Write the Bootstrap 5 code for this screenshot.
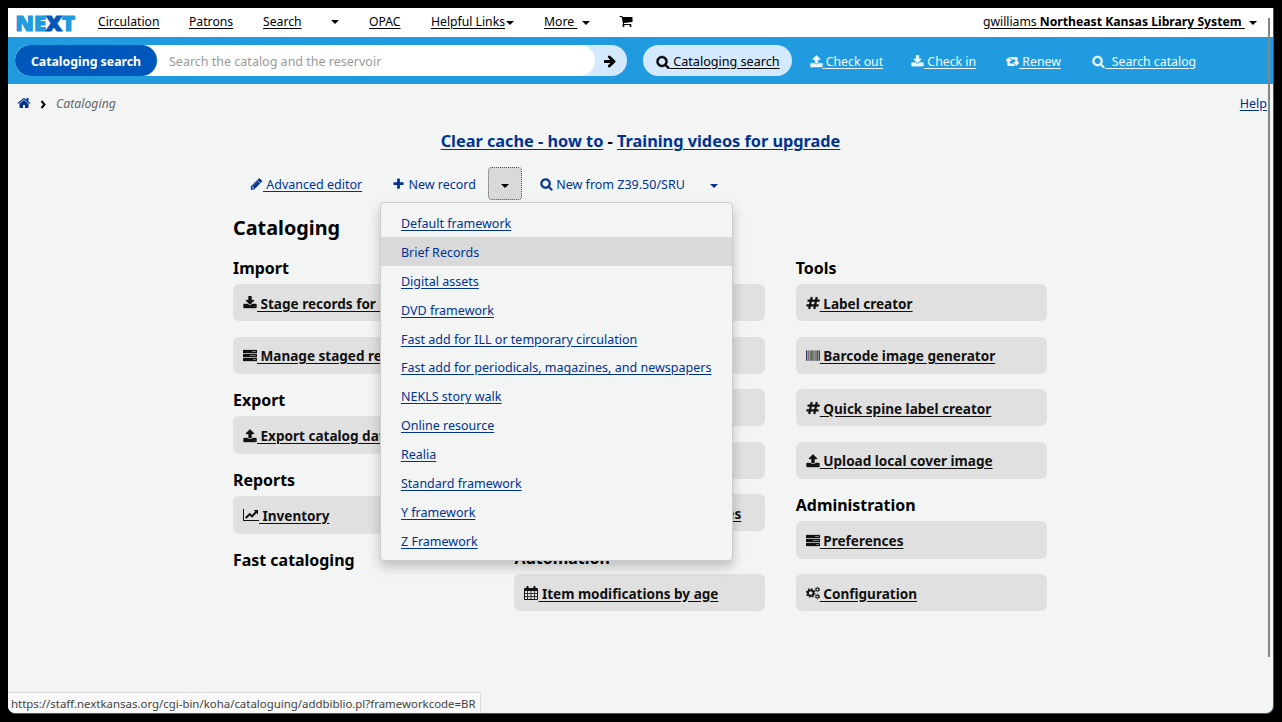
<!DOCTYPE html>
<html lang="en">
<head>
<meta charset="utf-8">
<title>Cataloging - Koha</title>
<link href="https://cdn.jsdelivr.net/npm/bootstrap@5.3.0/dist/css/bootstrap.min.css" rel="stylesheet">
<style>
body{background:#000;font-family:"Noto Sans","Open Sans",sans-serif;font-size:12.5px;line-height:18px;color:#000;height:722px;overflow:hidden;padding:8px}
a{color:#003391;text-underline-offset:2px}
.ico{width:14px;height:14px;fill:currentColor;vertical-align:-2px;overflow:visible;display:inline-block}
.window{height:706px;width:1266px;background:#f3f5f4;border-radius:0 0 8px 8px;border-right:1px solid #26627c;border-bottom:1px solid #26627c}
.topbar{height:29px;background:#fff;font-size:12.2px}
.topbar a{color:#000;white-space:pre}
.topbar .links{display:grid;grid-template-columns:91px 74px 68px 38px 62px 113px 75px 30px;align-items:center;height:28px;padding-left:15px}
.logo{width:75px;padding-left:7px}
.logo svg{display:block;margin-top:2px;overflow:visible}
.caret{display:inline-block;width:8px;border:4px solid transparent;border-top-color:currentColor;border-bottom:0;vertical-align:1px}
.searchbar{height:47px;background:#219be0;font-size:12.5px}
.pillbox{width:612px;height:31px;background:#d4e9fd;border-radius:16px}
.pillbox .field{width:580px;height:31px;background:#fff;border-radius:16px}
.pillbox .kind{width:142px;height:31px;padding-top:2px;border-radius:16px;background:#0057bb;color:#fff;font-size:12.3px;font-weight:700}
.pillbox .hint{color:#999;padding:2px 0 0 12px}
.modes a{color:#f2faff;white-space:pre;font-size:12.3px;padding-top:2px}
.modes a:not(.chosen) .ico{width:13px;height:13px}
.modes .chosen{height:31px;border-radius:16px;background:#d4e9fd;width:149px;padding-left:13px;color:#000;font-size:12.6px}
.crumbs{height:40px;padding:0 6px 0 9px}
.news{font-size:16.3px;font-weight:700;line-height:24px;height:43px;padding-top:5px}
.toolbar{height:33px;margin-left:242px;white-space:pre}
.toolbar>a{padding-top:2px}
.toggle{width:34px;height:33px;background:#d9d9d9;border:1px dotted #555;border-radius:4px}
.frameworks{position:absolute;left:-109px;top:34px;width:353px;height:359px;background:#f3f5f4;border:1px solid #ccc;border-radius:4px;box-shadow:0 6px 12px rgba(0,0,0,.22);padding:5px 0;z-index:5;margin:0;list-style:none;white-space:normal}
.frameworks a{display:block;height:28.9px;line-height:31px;padding-left:20px;font-size:12.53px;white-space:nowrap}
.frameworks .hot{background:#d9d9d9;text-decoration:none}
.content{margin-left:225px;width:814px}
.content h1{font-size:19.8px;line-height:28px;font-weight:700;margin:14.3px 0 14.5px}
.content h2{font-size:15.95px;line-height:22px;font-weight:700;margin:0 0 5.3px}
.modules{display:grid;grid-template-columns:repeat(3,251px);gap:30.4px}
.tile{display:flex;align-items:center;height:37.4px;margin-bottom:15.1px;padding:2px 0 0 10px;background:#e0e0e0;border-radius:6px;color:#111;font-size:13.55px;font-weight:700;white-space:pre;overflow:hidden}
.tile .ico{margin-top:-1px}
.status{position:absolute;left:8px;top:692px;width:473px;height:21px;background:#f9f9f9;border:1px solid #dcdcdc;border-left:0;border-bottom:0;border-bottom-left-radius:7px;padding-left:3px;font-size:11.43px;line-height:21px;color:#444;white-space:nowrap}
.scroller{position:absolute;left:1268px;top:18px;width:2px;height:639px;background:#858585}
</style>
</head>
<body>
<svg class="d-none">
<symbol id="search" viewBox="0 0 1792 1792"><path d="M1216 832q0-185-131.500-316.500t-316.500-131.500-316.500 131.500-131.500 316.500 131.500 316.500 316.500 131.500 316.500-131.500 131.500-316.500zm512 832q0 52-38 90t-90 38q-54 0-90-38l-343-342q-179 124-399 124-143 0-273.500-55.500t-225-150-150-225-55.500-273.500 55.500-273.500 150-225 225-150 273.500-55.500 273.500 55.500 225 150 150 225 55.500 273.500q0 220-124 399l343 343q37 37 37 90z" stroke="currentColor" stroke-width="50"/></symbol>
<symbol id="home" viewBox="0 0 1792 1792"><path d="M1472 992v480q0 26-19 45t-45 19h-384v-384h-256v384h-384q-26 0-45-19t-19-45v-480l576-477 575 474q1 2 1 6zm223-69l-62 74q-8 9-21 11h-3q-13 0-21-7l-692-577-692 577q-12 8-24 7-13-2-21-11l-62-74q-8-10-7-23.500t11-21.500l719-599q32-26 76-26t76 26l244 204v-195q0-14 9-23t23-9h192q14 0 23 9t9 23v408l219 182q10 8 11 21.500t-7 23.500z"/></symbol>
<symbol id="plus" viewBox="0 0 1792 1792"><path d="M1600 736v192q0 40-28 68t-68 28h-416v416q0 40-28 68t-68 28h-192q-40 0-68-28t-28-68v-416h-416q-40 0-68-28t-28-68v-192q0-40 28-68t68-28h416v-416q0-40 28-68t68-28h192q40 0 68 28t28 68v416h416q40 0 68 28t28 68z"/></symbol>
<symbol id="pencil" viewBox="0 0 1792 1792"><path d="M491 1536l91-91-235-235-91 91v107h128v128h107zm523-928q0-22-22-22-10 0-17 7l-542 542q-7 7-7 17 0 22 22 22 10 0 17-7l542-542q7-7 7-17zm-54-192l416 416-832 832h-416v-416zm683 96q0 53-37 90l-166 166-416-416 166-165q36-38 90-38 53 0 91 38l235 234q37 39 37 91z" stroke="currentColor" stroke-width="40"/></symbol>
<symbol id="upload" viewBox="0 0 1792 1792"><path d="M1600 1472q0-26-19-45t-45-19-45 19-19 45 19 45 45 19 45-19 19-45zm128-224v320q0 40-28 68t-68 28h-1472q-40 0-68-28t-28-68v-320q0-40 28-68t68-28h427q21 56 70.500 92t110.500 36h256q61 0 110.500-36t70.500-92h427q40 0 68 28t28 68zm-325-648q-17 40-59 40h-256v448q0 26-19 45t-45 19h-256q-26 0-45-19t-19-45v-448h-256q-42 0-59-40-17-39 14-69l448-448q18-19 45-19t45 19l448 448q31 30 14 69z" stroke="currentColor" stroke-width="50"/></symbol>
<symbol id="download" viewBox="0 0 1792 1792"><path d="M1600 1344q0-26-19-45t-45-19-45 19-19 45 19 45 45 19 45-19 19-45zm128-224v320q0 40-28 68t-68 28h-1472q-40 0-68-28t-28-68v-320q0-40 28-68t68-28h465l135 136q58 56 136 56t136-56l136-136h464q40 0 68 28t28 68zm-325-569q17 41-14 70l-448 448q-18 19-45 19t-45-19l-448-448q-31-29-14-70 17-39 59-39h256v-448q0-26 19-45t45-19h256q26 0 45 19t19 45v448h256q42 0 59 39z" stroke="currentColor" stroke-width="50"/></symbol>
<symbol id="cart" viewBox="0 0 1792 1792"><path d="M704 1536q0 52-38 90t-90 38-90-38-38-90 38-90 90-38 90 38 38 90zm896 0q0 52-38 90t-90 38-90-38-38-90 38-90 90-38 90 38 38 90zm128-1088v512q0 24-16.500 42.500t-40.500 21.500l-1044 122q13 60 13 70 0 16-24 64h920q26 0 45 19t19 45-19 45-45 19h-1024q-26 0-45-19t-19-45q0-11 8-31.500t16-36 21.500-40 15.500-29.500l-177-823h-204q-26 0-45-19t-19-45 19-45 45-19h256q16 0 28.500 6.500t19.500 15.500 13 24.500 8 26 5.500 29.500 4.500 26h1201q26 0 45 19t19 45z"/></symbol>
<symbol id="arrow" viewBox="0 0 1792 1792"><path d="M1600 960q0 54-37 91l-651 651q-39 37-91 37-51 0-90-37l-75-75q-38-38-38-91t38-91l293-293h-704q-52 0-84.500-37.500t-32.500-90.500v-128q0-53 32.500-90.500t84.500-37.500h704l-293-294q-38-36-38-90t38-90l75-75q38-38 90-38 53 0 91 38l651 651q37 35 37 90z"/></symbol>
<symbol id="retweet" viewBox="0 0 14 14"><path d="M-1 6.500 2.700 2.300 6.300 6.500H4.100v2.700h4.200L10.300 11.900H2.700q-1.200 0-1.200-1.200V6.500zM15 7.500 11.300 11.700 7.700 7.500h2.200V4.800H5.700L3.700 2.100h7.600q1.200 0 1.200 1.200V7.500z"/></symbol>
<symbol id="server" viewBox="0 0 14 14"><path fill-rule="evenodd" stroke="currentColor" stroke-width=".25" d="M.4 1h13.200q.4 0 .4.400v2.300q0 .4-.4.400H.4q-.4 0-.4-.4V1.400q0-.4.400-.4zM9 2.200v.7h4v-.7zM.4 5h13.200q.4 0 .4.400v2.300q0 .4-.4.400H.4q-.4 0-.4-.4V5.400q0-.4.400-.4zM6.500 6.200v.7H13v-.7zM.4 9h13.200q.4 0 .4.400v2.300q0 .4-.4.400H.4q-.4 0-.4-.4V9.400q0-.4.400-.4zM10 10.200v.7h3v-.7z"/></symbol>
<symbol id="chart" viewBox="0 0 16 14"><path d="M0 1h1v11h15v1H0zM15 2v4.500l-1.400-1.400-4.600 4.600-2.200-2.200-3.300 3.300L2 9.300l4.800-4.600L9 6.900l3.100-3.300L10.700 2z"/></symbol>
<symbol id="hash" viewBox="0 0 14 14"><path fill="none" stroke="currentColor" stroke-width="2.200" d="M5.700 1 3.200 13M10.800 1 8.300 13M1.500 4.700h12.200M.4 9.300h12.200"/></symbol>
<symbol id="barcode" viewBox="0 0 15 14"><path fill="#a9a4a4" d="M0 1h15v11H0z"/><path fill="#30305c" d="M0 1h1v11H0zM5 1h1v11H5zM12 1h1v11h-1zM14 1h1v11h-1z"/><path fill="#7b6178" d="M2 1h1v11H2zM8 1h1v11H8zM10 1h1v11h-1z"/><path fill="#668066" d="M4 1h1v11H4zM6.500 1h1v11h-1zM11 1h1v11h-1z"/></symbol>
<symbol id="calendar" viewBox="0 0 14 14"><path fill-rule="evenodd" d="M1 2h1.500V.8q0-.8.800-.8h.5q.8 0 .8.800V2h4.800V.8q0-.8.800-.8h.5q.8 0 .8.800V2H13q1 0 1 1v10q0 1-1 1H1q-1 0-1-1V3q0-1 1-1zM1 5v2h2.200V5zm3 0v2h2.600V5zm3.400 0v2H10V5zm3.400 0v2H13V5zM1 7.800v2.200h2.200V7.800zm3 0v2.200h2.600V7.800zm3.400 0v2.200H10V7.800zm3.400 0v2.200H13V7.800zM1 10.800V13h2.200v-2.200zm3 0V13h2.600v-2.200zm3.400 0V13H10v-2.200zm3.400 0V13H13v-2.200z"/></symbol>
<symbol id="cogs" viewBox="0 0 15 14"><g fill="none" stroke="currentColor"><circle cx="5" cy="7" r="3" stroke-width="2"/><circle cx="5" cy="7" r="4.500" stroke-width="1.300" stroke-dasharray="1.770"/><circle cx="12.200" cy="3.200" r="1.600" stroke-width="1.200"/><circle cx="12.200" cy="3.200" r="2.500" stroke-width=".8" stroke-dasharray="1.300"/><circle cx="12.200" cy="10.800" r="1.600" stroke-width="1.200"/><circle cx="12.200" cy="10.800" r="2.500" stroke-width=".8" stroke-dasharray="1.300"/></g></symbol>
</svg>

<div class="window">
  <header class="topbar d-flex align-items-start">
    <div class="logo"><svg width="62" height="26"><text x=".5" y="20.500" textLength="59.500" lengthAdjust="spacingAndGlyphs" font-family="Open Sans" font-weight="800" font-size="21.500" fill="#219be0" stroke="#219be0" stroke-width="1.200">NE<tspan fill="#0057bb" stroke="#0057bb">X</tspan>T</text></svg></div>
    <nav class="links flex-grow-1">
      <a href="#">Circulation</a><a href="#">Patrons</a><a href="#">Search</a><span class="caret"></span><a href="#">OPAC</a><a href="#" class="text-decoration-none"><u>Helpful Links</u><span class="caret" style="margin-left:1px"></span></a><a href="#" class="text-decoration-none"><u>More </u> <span class="caret" style="margin-left:2px"></span></a><a href="#"><svg class="ico"><use href="#cart"/></svg></a>
    </nav>
    <a href="#" class="text-decoration-none" style="line-height:28px;padding-right:16px"><u>gwilliams <b>Northeast Kansas Library System </b></u> <span class="caret" style="margin-left:1px"></span></a>
  </header>

  <div class="searchbar d-flex align-items-center">
    <div class="pillbox d-flex align-items-center" style="margin-left:7px">
      <div class="field d-flex align-items-center"><div class="kind d-flex align-items-center justify-content-center">Cataloging search</div><span class="hint">Search the catalog and the reservoir</span></div>
      <svg class="ico" style="margin-left:8px"><use href="#arrow"/></svg>
    </div>
    <nav class="modes d-flex align-items-center" style="margin-left:16px">
      <a href="#" class="chosen d-flex align-items-center"><svg class="ico"><use href="#search"/></svg><span> Cataloging search</span></a>
      <a href="#" style="margin-left:17.500px"><svg class="ico"><use href="#upload"/></svg> Check out</a>
      <a href="#" style="margin-left:28px"><svg class="ico"><use href="#download"/></svg> Check in</a>
      <a href="#" style="margin-left:30px"><svg class="ico"><use href="#retweet"/></svg> Renew</a>
      <a href="#" style="margin-left:31.500px"><svg class="ico"><use href="#search"/></svg>  Search catalog</a>
    </nav>
  </div>

  <div class="crumbs d-flex align-items-center">
    <a href="#"><svg class="ico"><use href="#home"/></svg></a>
    <svg width="6" height="9" style="margin-left:9px"><path d="M1.500 1 4.500 4.500 1.500 8" fill="none" stroke="#000" stroke-width="2"/></svg>
    <i style="margin-left:10px;color:#666;font-size:12.3px">Cataloging</i>
    <a href="#" class="ms-auto">Help</a>
  </div>

  <div class="news text-center"><a href="#">Clear cache - how to</a> - <a href="#">Training videos for upgrade</a></div>

  <div class="toolbar d-flex align-items-center">
    <a href="#"><svg class="ico" style="width:13px"><use href="#pencil"/></svg> Advanced editor</a>
    <a href="#" class="text-decoration-none" style="margin-left:30px"><svg class="ico" style="width:13px"><use href="#plus"/></svg> New record</a>
    <div class="toggle position-relative d-flex align-items-center justify-content-center" style="margin-left:12px;margin-right:12px">
      <span class="caret mt-1"></span>
      <ul class="frameworks">
        <li><a href="#">Default framework</a></li><li><a href="#" class="hot">Brief Records</a></li><li><a href="#">Digital assets</a></li><li><a href="#">DVD framework</a></li><li><a href="#">Fast add for ILL or temporary circulation</a></li><li><a href="#">Fast add for periodicals, magazines, and newspapers</a></li><li><a href="#">NEKLS story walk</a></li><li><a href="#">Online resource</a></li><li><a href="#">Realia</a></li><li><a href="#">Standard framework</a></li><li><a href="#">Y framework</a></li><li><a href="#">Z Framework</a></li>
      </ul>
    </div>
    <a href="#" class="text-decoration-none" style="margin-left:6px"><svg class="ico" style="width:13px"><use href="#search"/></svg> New from Z39.50/SRU</a>
    <a href="#" style="margin-left:25px"><span class="caret"></span></a>
  </div>

  <main class="content">
    <h1>Cataloging</h1>
    <div class="modules">
      <section>
        <h2>Import</h2>
        <a href="#" class="tile"><svg class="ico"><use href="#download"/></svg><span> Stage records for import</span></a>
        <a href="#" class="tile"><svg class="ico"><use href="#server"/></svg><span> Manage staged records</span></a>
        <h2>Export</h2>
        <a href="#" class="tile"><svg class="ico"><use href="#upload"/></svg><span> Export catalog data</span></a>
        <h2>Reports</h2>
        <a href="#" class="tile"><svg class="ico" style="width:16px"><use href="#chart"/></svg><span> Inventory</span></a>
        <h2>Fast cataloging</h2>
      </section>
      <section>
        <h2>Batch editing</h2>
        <a href="#" class="tile"><svg class="ico"><use href="#pencil"/></svg><span> Batch item modification</span></a>
        <a href="#" class="tile"><svg class="ico"><use href="#pencil"/></svg><span> Batch item deletion</span></a>
        <a href="#" class="tile"><svg class="ico"><use href="#pencil"/></svg><span> Batch record edits</span></a>
        <a href="#" class="tile"><svg class="ico"><use href="#pencil"/></svg><span> Batch record deletion</span></a>
        <a href="#" class="tile"><svg class="ico" style="width:12px"><use href="#server"/></svg><span> MARC modification templates</span></a>
        <h2>Automation</h2>
        <a href="#" class="tile"><svg class="ico"><use href="#calendar"/></svg><span> Item modifications by age</span></a>
      </section>
      <section>
        <h2>Tools</h2>
        <a href="#" class="tile"><svg class="ico"><use href="#hash"/></svg><span> Label creator</span></a>
        <a href="#" class="tile"><svg class="ico"><use href="#barcode"/></svg><span> Barcode image generator</span></a>
        <a href="#" class="tile"><svg class="ico"><use href="#hash"/></svg><span> Quick spine label creator</span></a>
        <a href="#" class="tile"><svg class="ico"><use href="#upload"/></svg><span> Upload local cover image</span></a>
        <h2>Administration</h2>
        <a href="#" class="tile"><svg class="ico"><use href="#server"/></svg><span> Preferences</span></a>
        <a href="#" class="tile"><svg class="ico"><use href="#cogs"/></svg><span> Configuration</span></a>
      </section>
    </div>
  </main>
</div>
<div class="status">https://staff.nextkansas.org/cgi-bin/koha/cataloguing/addbiblio.pl?frameworkcode=BR</div>
<div class="scroller"></div>
<script src="https://cdn.jsdelivr.net/npm/bootstrap@5.3.0/dist/js/bootstrap.bundle.min.js"></script>
</body>
</html>
